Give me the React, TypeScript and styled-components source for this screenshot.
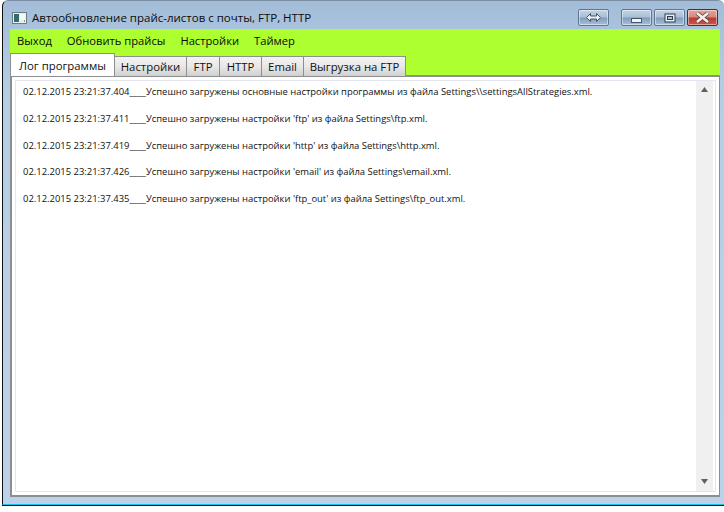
import React from "react";
import styled, { createGlobalStyle } from "styled-components";

const Global = createGlobalStyle`
  html, body { margin: 0; padding: 0; background: #fff; width: 724px; height: 512px; overflow: hidden; }
  body { font-family: "Open Sans", "Noto Sans", "Liberation Sans", sans-serif; }
`;

const Page = styled.div`
  width: 724px;
  height: 512px;
  padding-left: 2px;
  box-sizing: border-box;
  background: #fff;
`;

const Window = styled.div`
  width: 722px;
  height: 505px;
  box-sizing: border-box;
  display: flex;
  flex-direction: column;
  border-left: 1px solid #111;
  border-top: 1px solid #7b8ea3;
  border-radius: 6px 6px 0 0;
  border-bottom: 1px solid #19c3e6;
  box-shadow: 0 1px 0 #111;
  background: linear-gradient(180deg, #a3bdd8 0%, #b6cde6 18%, #bcd2ea 100%);
  padding: 0 4px 7px 7px;
`;

const TitleBar = styled.div`
  height: 28px;
  display: flex;
  align-items: center;
  flex-shrink: 0;
`;

const AppIcon = styled.svg`
  width: 15px;
  height: 12px;
  margin: 5px 5px 0 2px;
  flex-shrink: 0;
`;

const Title = styled.div`
  font-size: 11.5px;
  color: #0c0c0c;
  margin-top: 4px;
  flex: 1;
  white-space: nowrap;
`;

const CaptionButtons = styled.div`
  display: flex;
  align-items: flex-start;
  align-self: flex-start;
  margin-top: 8px;
  margin-right: 2px;
`;

const CaptionButton = styled.div<{ $gap?: number; $close?: boolean }>`
  width: 31px;
  height: 17px;
  box-sizing: border-box;
  margin-left: ${(p) => p.$gap ?? 0}px;
  border: 1px solid ${(p) => (p.$close ? "#5b2a2a" : "#5f7790")};
  border-radius: 2px;
  display: flex;
  align-items: center;
  justify-content: center;
  box-shadow: inset 0 0 0 1px rgba(255, 255, 255, 0.45);
  background: ${(p) =>
    p.$close
      ? "linear-gradient(180deg,#e3a49c 0%,#d6877f 48%,#b93b2e 52%,#c9584c 100%)"
      : "linear-gradient(180deg,#c3d3e4 0%,#a9bfd6 48%,#7f9cbb 52%,#a8c0d8 100%)"};
`;

const Content = styled.div`
  flex: 1;
  min-height: 0;
  display: flex;
  flex-direction: column;
  background: #fff;
`;

const Header = styled.div`
  background: #adff2f;
  height: 47px;
  flex-shrink: 0;
  display: flex;
  flex-direction: column;
`;

const Menu = styled.div`
  height: 23px;
  display: flex;
  align-items: center;
  padding-left: 7px;
  gap: 15px;
  font-size: 11.2px;
  color: #0a0a0a;
  flex-shrink: 0;
`;

const TabRow = styled.div`
  display: flex;
  align-items: flex-end;
  height: 24px;
`;

const Tab = styled.div<{ $active?: boolean; $w: number }>`
  width: ${(p) => p.$w}px;
  height: ${(p) => (p.$active ? 23 : 20)}px;
  box-sizing: border-box;
  border: 1px solid #8e8e8e;
  border-bottom: 0;
  margin-left: ${(p) => (p.$active ? 0 : -1)}px;
  display: flex;
  align-items: center;
  justify-content: center;
  font-size: 11.35px;
  color: #111;
  white-space: nowrap;
  background: ${(p) => (p.$active ? "#fff" : "linear-gradient(180deg,#f3f3f3 0%,#e8e8e8 50%,#d0d0d0 100%)")};
  position: relative;
  z-index: ${(p) => (p.$active ? 1 : 0)};
`;

const Panel = styled.div`
  flex: 1;
  min-height: 0;
  display: flex;
  border: 1px solid #8e8e8e;
  border-width: 2px 1px 2px 2px;
  margin-top: -1px;
  padding: 3px;
  background: #fff;
`;

const LogBox = styled.div`
  flex: 1;
  display: flex;
  border: 1px solid #e3e6ee;
  padding-right: 2px;
  min-width: 0;
`;

const LogList = styled.div`
  flex: 1;
  padding: 4px 0 0 7px;
  display: flex;
  flex-direction: column;
  gap: 12.8px;
`;

const LogLine = styled.div`
  font-size: 9.43px;
  line-height: 14px;
  height: 14px;
  color: #111;
  white-space: nowrap;
`;

const ScrollBar = styled.div`
  width: 17px;
  background: #f0f0f0;
  display: flex;
  flex-direction: column;
  justify-content: space-between;
  align-items: center;
  padding: 6px 0 7px;
`;

const Arrow = styled.svg`
  width: 7px;
  height: 5px;
  fill: #606060;
`;

const logs = [
  "02.12.2015 23:21:37.404____Успешно загружены основные настройки программы из файла Settings\\\\settingsAllStrategies.xml.",
  "02.12.2015 23:21:37.411____Успешно загружены настройки 'ftp' из файла Settings\\ftp.xml.",
  "02.12.2015 23:21:37.419____Успешно загружены настройки 'http' из файла Settings\\http.xml.",
  "02.12.2015 23:21:37.426____Успешно загружены настройки 'email' из файла Settings\\email.xml.",
  "02.12.2015 23:21:37.435____Успешно загружены настройки 'ftp_out' из файла Settings\\ftp_out.xml.",
];

const tabs: [string, number][] = [
  ["Настройки", 73],
  ["FTP", 34],
  ["HTTP", 43],
  ["Email", 43],
  ["Выгрузка на FTP", 103],
];

export default function App() {
  return (
    <Page>
      <Global />
      <Window>
        <TitleBar>
          <AppIcon viewBox="0 0 15 12">
            <rect x="0.5" y="0.5" width="14" height="11" fill="#e8eef2" stroke="#6b7b88" />
            <rect x="2" y="2" width="5" height="8" fill="#2f6f6a" />
            <rect x="8" y="2" width="5" height="6" fill="#f5f7f8" />
            <rect x="12" y="8" width="1" height="2" fill="#7fb04a" />
          </AppIcon>
          <Title>Автообновление прайс-листов с почты, FTP, HTTP</Title>
          <CaptionButtons>
            <CaptionButton>
              <svg width="15" height="9" viewBox="0 0 15 9">
                <path d="M0.5 4.5 L4.5 0.5 V3 H10.5 V0.5 L14.5 4.5 L10.5 8.5 V6 H4.5 V8.5 Z" fill="#eef3f8" stroke="#44566a" strokeWidth="1" />
              </svg>
            </CaptionButton>
            <CaptionButton $gap={12}>
              <svg width="11" height="5" viewBox="0 0 11 5" style={{ marginTop: 6 }}>
                <rect x="0.5" y="0.5" width="10" height="4" fill="#f2f4f6" stroke="#44566a" />
              </svg>
            </CaptionButton>
            <CaptionButton $gap={2}>
              <svg width="12" height="10" viewBox="0 0 12 10">
                <rect x="1" y="1" width="10" height="8" fill="#e8eef4" stroke="#2f3f50" />
                <rect x="3.5" y="3.5" width="5" height="3" fill="#aec3d8" stroke="#2f3f50" strokeWidth="1" />
              </svg>
            </CaptionButton>
            <CaptionButton $gap={2} $close>
              <svg width="15" height="11" viewBox="0 0 15 11">
                <path d="M2 1 L13 10 M13 1 L2 10" stroke="#5a3a3a" strokeWidth="4" />
                <path d="M2 1 L13 10 M13 1 L2 10" stroke="#f4f0f0" strokeWidth="2.6" />
              </svg>
            </CaptionButton>
          </CaptionButtons>
        </TitleBar>
        <Content>
          <Header>
            <Menu>
              <span>Выход</span>
              <span>Обновить прайсы</span>
              <span>Настройки</span>
              <span>Таймер</span>
            </Menu>
            <TabRow>
              <Tab $active $w={105}>Лог программы</Tab>
              {tabs.map(([t, w]) => (
                <Tab key={t} $w={w}>{t}</Tab>
              ))}
            </TabRow>
          </Header>
          <Panel>
            <LogBox>
              <LogList>
                {logs.map((l) => (
                  <LogLine key={l}>{l}</LogLine>
                ))}
              </LogList>
              <ScrollBar>
                <Arrow viewBox="0 0 7 5"><path d="M3.5 0 L7 5 H0 Z" /></Arrow>
                <Arrow viewBox="0 0 7 5"><path d="M0 0 H7 L3.5 5 Z" /></Arrow>
              </ScrollBar>
            </LogBox>
          </Panel>
        </Content>
      </Window>
    </Page>
  );
}
